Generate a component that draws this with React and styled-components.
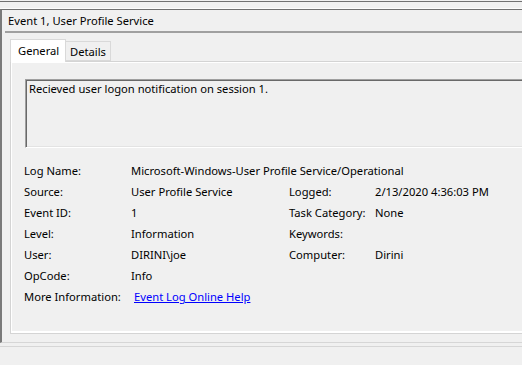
import React from "react";
import styled, { createGlobalStyle } from "styled-components";

const Global = createGlobalStyle`
  html, body { margin: 0; padding: 0; }
  body {
    background: #f0f0f0;
    font-family: "Noto Sans", "Open Sans", sans-serif;
    font-size: 11.2px;
    color: #000;
    width: 522px;
    height: 365px;
    overflow: hidden;
  }
`;

const Window = styled.div`
  display: flex;
  flex-direction: column;
  height: 365px;
`;

const TopEdge = styled.div`
  height: 6px;
  margin-top: 1px;
  border-top: 1px solid #707070;
  border-bottom: 1px solid #fcfcfc;
  flex: none;
`;

const Panel = styled.section`
  flex: none;
  height: 334px;
  box-sizing: border-box;
  border-top: 1px solid #707070;
  border-left: 2px solid #7a7a7a;
  border-bottom: 1px solid #d6d6d6;
  display: flex;
  flex-direction: column;
`;

const Title = styled.div`
  height: 21px;
  line-height: 22px;
  padding-left: 6px;
  white-space: nowrap;
`;

const Separator = styled.div`
  height: 2px;
  margin-left: 3px;
  background: #a0a0a0;
`;

const TabArea = styled.div`
  margin-top: 6px;
  margin-left: 8px;
  display: flex;
  flex-direction: column;
`;

const TabStrip = styled.div`
  display: flex;
  align-items: flex-end;
  height: 22px;
  position: relative;
  z-index: 1;
`;

const Tab = styled.div`
  box-sizing: border-box;
  height: ${(p) => (p.$active ? "23px" : "20px")};
  margin-bottom: ${(p) => (p.$active ? "-1px" : "0")};
  width: ${(p) => p.$w}px;
  padding-left: ${(p) => (p.$active ? "7px" : "4px")};
  line-height: ${(p) => (p.$active ? "21px" : "19px")};
  background: ${(p) => (p.$active ? "#ffffff" : "#f0f0f0")};
  border: 1px solid #d9d9d9;
  border-bottom: ${(p) => (p.$active ? "none" : "1px solid #d9d9d9")};
  border-left: ${(p) => (p.$first ? "1px solid #d9d9d9" : "none")};
  white-space: nowrap;
`;

const TabPage = styled.div`
  box-sizing: border-box;
  height: 273px;
  border: 1px solid #d4d4d4;
  border-right: none;
  box-shadow: inset 1px 1px 0 #ffffff, inset 0 -1px 0 #ffffff, inset 0 -2px 0 #ffffff;
  padding: 17px 0 0 13px;
  display: flex;
  flex-direction: column;
`;

const Message = styled.div`
  box-sizing: border-box;
  height: 69px;
  margin-left: 1px;
  border-top: 1px solid #a0a0a0;
  border-left: 1px solid #a0a0a0;
  border-bottom: 1px solid #ffffff;
  box-shadow: inset 1px 1px 0 #696969, inset 0 -1px 0 #e3e3e3;
  padding: 1px 0 0 3px;
  line-height: 16px;
  white-space: nowrap;
`;

const Fields = styled.div`
  margin-top: 12px;
  display: grid;
  grid-template-columns: 107px 158px 86px 1fr;
  grid-auto-rows: 21px;
  line-height: 21px;
  white-space: nowrap;
`;

const Label = styled.div``;

const Value = styled.div`
  grid-column: ${(p) => (p.$span ? "2 / span 3" : "auto")};
`;

const HelpLink = styled.a`
  color: #0000ff;
  text-decoration: underline;
  margin-left: 3px;
  cursor: pointer;
`;

const StatusArea = styled.div`
  flex: 1;
  margin-top: 3px;
  border-top: 1px solid #d6d6d6;
`;

export default function App() {
  return (
    <>
      <Global />
      <Window>
        <TopEdge />
        <Panel>
          <Title>Event 1, User Profile Service</Title>
          <Separator />
          <TabArea>
            <TabStrip>
              <Tab $active $first $w={56}>General</Tab>
              <Tab $w={45}>Details</Tab>
            </TabStrip>
            <TabPage>
              <Message>Recieved user logon notification on session 1.</Message>
              <Fields>
                <Label>Log Name:</Label>
                <Value $span>Microsoft-Windows-User Profile Service/Operational</Value>
                <Label>Source:</Label>
                <Value>User Profile Service</Value>
                <Label>Logged:</Label>
                <Value>2/13/2020 4:36:03 PM</Value>
                <Label>Event ID:</Label>
                <Value>1</Value>
                <Label>Task Category:</Label>
                <Value>None</Value>
                <Label>Level:</Label>
                <Value>Information</Value>
                <Label>Keywords:</Label>
                <Value></Value>
                <Label>User:</Label>
                <Value>DIRINI\joe</Value>
                <Label>Computer:</Label>
                <Value>Dirini</Value>
                <Label>OpCode:</Label>
                <Value $span>Info</Value>
                <Label>More Information:</Label>
                <Value $span>
                  <HelpLink>Event Log Online Help</HelpLink>
                </Value>
              </Fields>
            </TabPage>
          </TabArea>
        </Panel>
        <StatusArea />
      </Window>
    </>
  );
}
